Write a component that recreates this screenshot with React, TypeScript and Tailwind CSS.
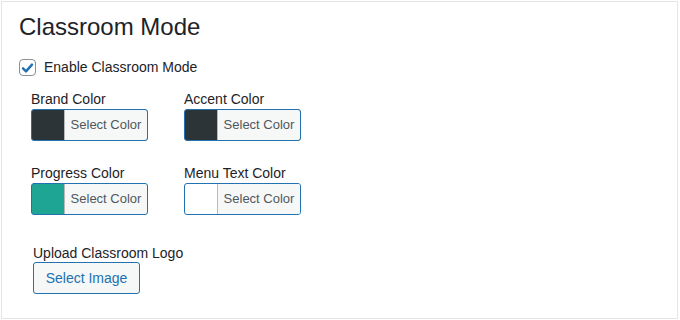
import React from 'react';

interface ColorOption {
  label: string;
  swatch: string;
}

const colorOptions: ColorOption[] = [
  { label: 'Brand Color', swatch: 'bg-[#2d3437]' },
  { label: 'Accent Color', swatch: 'bg-[#2d3437]' },
  { label: 'Progress Color', swatch: 'bg-[#1fa594]' },
  { label: 'Menu Text Color', swatch: 'bg-white' },
];

const ColorPicker: React.FC<ColorOption> = ({ label, swatch }) => (
  <div className="flex flex-col items-start">
    <span className="text-[14px] leading-[18px] text-[#1d2327]">{label}</span>
    <button
      type="button"
      className={`mt-px flex h-[32px] w-[117px] overflow-hidden rounded-[3px] border border-[#2271b1] ${swatch}`}
    >
      <span className="w-[32px] shrink-0" />
      <span className="flex h-full flex-1 items-center justify-center border-l border-l-black/25 bg-[#f6f7f7] text-[13px] text-[#50575e]">
        Select Color
      </span>
    </button>
  </div>
);

export default function App() {
  return (
    <div className="h-[320px] w-[680px] bg-white p-px" style={{ fontFamily: '"Liberation Sans", Arial, sans-serif' }}>
      <div className="h-[318px] w-[677px] border border-[#e4e4e4] pl-[17px] pt-[10px]">
        <h1 className="text-[24px] leading-[29px] text-[#1d2327]">Classroom Mode</h1>

        <label className="mt-[16px] flex items-center gap-2">
          <span className="flex h-[17px] w-[17px] items-center justify-center rounded-[4px] border border-[#8c8f94] bg-white">
            <svg viewBox="0 0 20 20" className="h-[16px] w-[16px]">
              <path d="M4 10.5l4 4 8-9" fill="none" stroke="#2271b1" strokeWidth="3.2" strokeLinecap="round" strokeLinejoin="round" />
            </svg>
          </span>
          <span className="text-[14px] text-[#1d2327]">Enable Classroom Mode</span>
        </label>

        <div className="mt-[12px] grid w-[318px] grid-cols-2 gap-y-[23px] pl-[12px]">
          {colorOptions.map(opt => (
            <ColorPicker key={opt.label} {...opt} />
          ))}
        </div>

        <div className="mt-[29px] flex flex-col items-start pl-[14px]">
          <span className="text-[14px] leading-[18px] text-[#1d2327]">Upload Classroom Logo</span>
          <button
            type="button"
            className="flex h-[32px] w-[107px] items-center justify-center rounded-[3px] border border-[#2271b1] bg-[#f6f7f7] text-[14px] text-[#2271b1]"
          >
            Select Image
          </button>
        </div>
      </div>
    </div>
  );
}
